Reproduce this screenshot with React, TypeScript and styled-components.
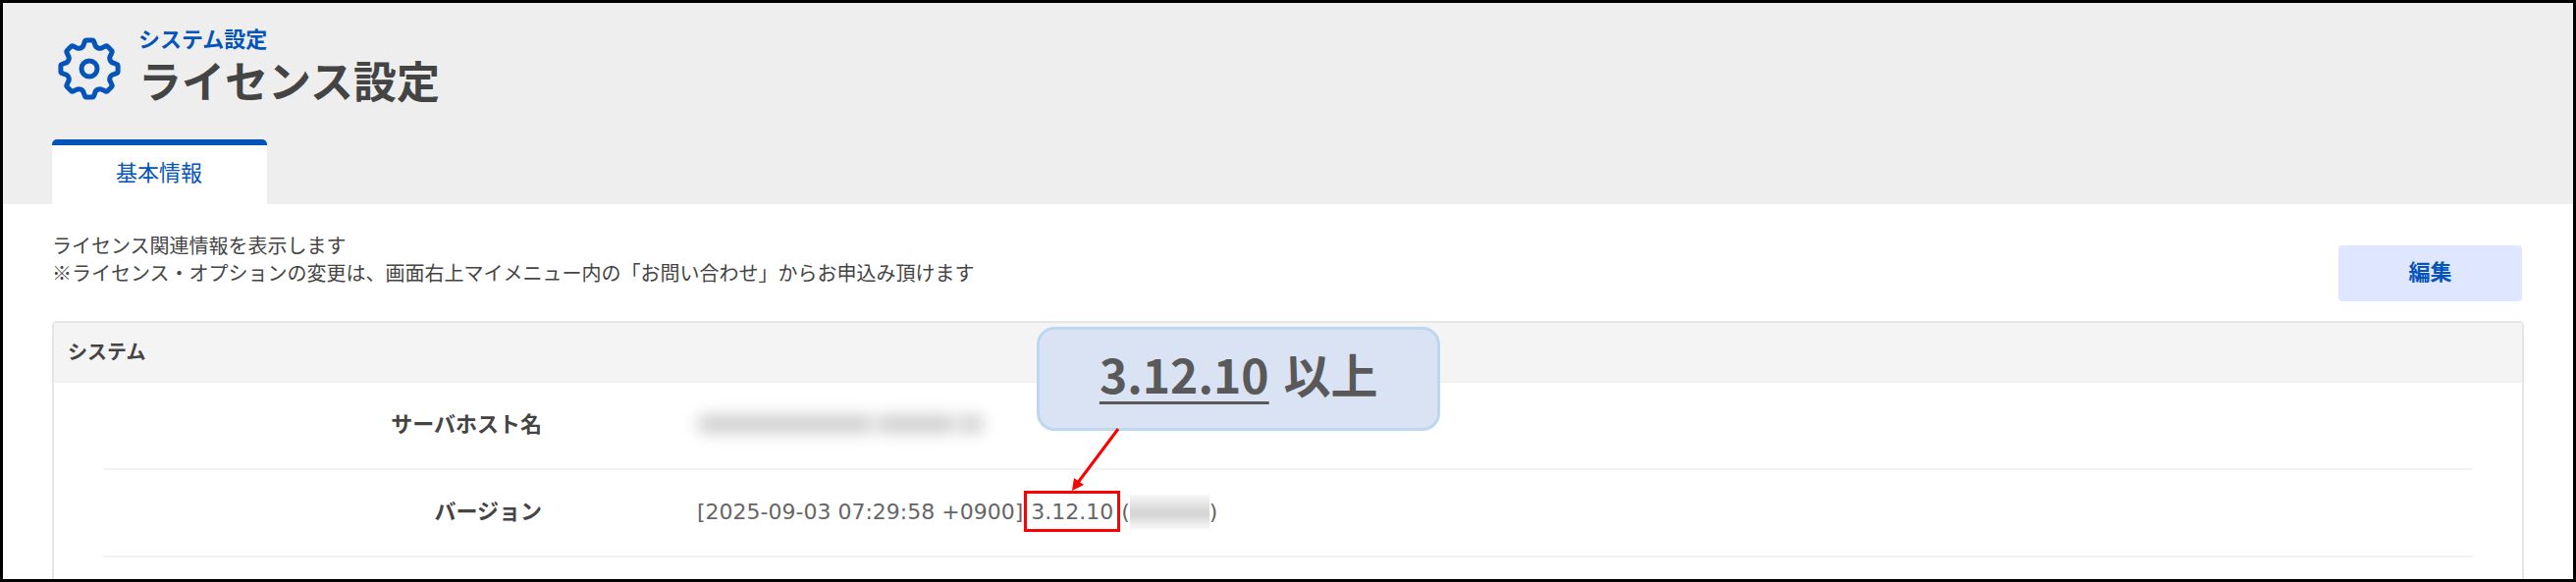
import React from "react";
import styled, { createGlobalStyle } from "styled-components";

const BLUE = "#0454ba";

const GlobalStyle = createGlobalStyle`
  *, *::before, *::after { box-sizing: border-box; }
  body {
    margin: 0;
    font-family: "Noto Sans CJK JP", "Noto Sans", sans-serif;
    color: #444;
    background: #fff;
  }
`;

const Frame = styled.div`
  display: flex;
  flex-direction: column;
  height: 100vh;
  border: 3px solid #000;
  overflow: hidden;
`;

const Header = styled.header`
  padding: 20px 50px 0;
  background: #eee;
`;

const TitleRow = styled.div`
  display: flex;
  align-items: center;
  gap: 18px;
  padding-left: 6px;
`;

const GearSvg = styled.svg`
  flex: none;
  width: 64px;
  height: 64px;
  fill: none;
  stroke: ${BLUE};
  stroke-width: 5;
  stroke-linejoin: round;
`;

const Titles = styled.div`
  padding-bottom: 8px;
`;

const Category = styled.p`
  margin: 0;
  font-size: 22px;
  font-weight: 700;
  line-height: 30px;
  color: ${BLUE};
`;

const Title = styled.h1`
  margin: 0;
  font-size: 44px;
  font-weight: 700;
  line-height: 56px;
`;

const Tabs = styled.nav`
  display: flex;
  margin-top: 25px;
`;

const Tab = styled.a`
  padding: 10px 66px 18px 65px;
  border-top: 6px solid ${BLUE};
  border-radius: 5px 5px 0 0;
  background: #fff;
  color: ${BLUE};
  font-size: 22px;
  line-height: 32px;
  text-decoration: none;
`;

const Main = styled.main`
  flex: 1;
  display: flex;
  flex-direction: column;
  padding: 28px 50px 0;
`;

const Toolbar = styled.div`
  display: flex;
  justify-content: space-between;
  align-items: flex-start;
  padding-right: 2px;
  margin-bottom: 20px;
`;

const Description = styled.p`
  margin: 0;
  font-size: 20px;
  line-height: 28px;
`;

const EditButton = styled.button`
  width: 187px;
  height: 57px;
  margin-top: 14px;
  padding: 0 0 8px;
  border: 0;
  border-radius: 4px;
  background: #dfe6ff;
  color: ${BLUE};
  font: 700 22px "Noto Sans CJK JP", sans-serif;
`;

const Panel = styled.section`
  flex: 1;
  border: 2px solid #e6e6e6;
  border-bottom: 0;
  border-radius: 5px 5px 0 0;
`;

const PanelTitle = styled.h2`
  margin: 0;
  padding: 14px 14px 16px;
  border-bottom: 1px solid #eee;
  background: #f4f4f4;
  font-size: 20px;
  font-weight: 700;
  line-height: 30px;
`;

const Rows = styled.dl`
  margin: 0 50px;
`;

const Row = styled.div`
  display: flex;
  align-items: center;
  gap: 158px;
  height: 89px;
  padding-bottom: 3px;
  border-bottom: 2px solid #f2f2f2;
`;

const Label = styled.dt`
  width: 447px;
  padding-bottom: 4px;
  font-size: 22px;
  font-weight: 700;
  text-align: right;
`;

const Value = styled.dd`
  display: flex;
  align-items: center;
  margin: 0;
  font-family: "DejaVu Sans", sans-serif;
  font-size: 22px;
  color: #666;
`;

const Highlight = styled.span`
  position: relative;
  display: inline-flex;
  align-items: center;
  height: 42px;
  margin: 0 1px;
  padding: 0 4px;
  border: 3px solid #f00;
`;

const Callout = styled.div`
  position: absolute;
  left: 10px;
  bottom: 100px;
  display: flex;
  align-items: center;
  justify-content: center;
  gap: 4px;
  width: 411px;
  height: 106px;
  padding-bottom: 12px;
  border: 3px solid #bcd7ef;
  border-radius: 18px;
  background: #dae3f3;
  color: #595959;
  font: 700 48px/64px "Noto Sans CJK JP", sans-serif;
  white-space: pre;
`;

const Underlined = styled.span`
  text-decoration: underline;
  text-decoration-thickness: 3px;
  text-decoration-skip-ink: none;
  text-underline-offset: 8px;
`;

const Arrow = styled.svg`
  position: absolute;
  left: 43px;
  bottom: 38px;
  width: 56px;
  height: 66px;
`;

const Redacted = styled.span`
  display: flex;
  gap: 6px;
  padding-left: 2px;
  filter: blur(8px);
`;

const RedactedWord = styled.span<{ $width: number }>`
  width: ${(p) => p.$width}px;
  height: 18px;
  background: #cdcdcd;
`;

const RedactedBuild = styled.span`
  width: 81px;
  height: 35px;
  background: linear-gradient(#f8f8f8, #d8d8d8 45%, #d6d6d6 60%, #f8f8f8);
`;

// Outline of an eight-toothed gear centred on the origin.
function gearPath(): string {
  const tooth = [
    [-5.6, -25.2], [-4.9, -27], [-4.4, -29.1], [-3, -29.1],
    [3, -29.1], [4.4, -29.1], [4.9, -27], [5.6, -25.2],
  ];
  let d = "";
  for (let i = 0; i < 8; i++) {
    const a = (i * Math.PI) / 4;
    const p = tooth.map(
      ([x, y]) =>
        `${(x * Math.cos(a) - y * Math.sin(a)).toFixed(2)} ${(x * Math.sin(a) + y * Math.cos(a)).toFixed(2)}`
    );
    d += i === 0 ? `M${p[0]}` : `A5.2 5.2 0 0 0 ${p[0]}`;
    d += `L${p[1]}Q${p[2]} ${p[3]}L${p[4]}Q${p[5]} ${p[6]}L${p[7]}`;
    if (i === 7) d += "A5.2 5.2 0 0 0 -5.6 -25.2Z";
  }
  return d;
}

const GearIcon = () => (
  <GearSvg viewBox="-32 -32 64 64" aria-hidden="true">
    <path d={gearPath()} />
    <circle r="8" />
  </GearSvg>
);

export default function App() {
  return (
    <>
      <GlobalStyle />
      <Frame>
        <Header>
          <TitleRow>
            <GearIcon />
            <Titles>
              <Category>システム設定</Category>
              <Title>ライセンス設定</Title>
            </Titles>
          </TitleRow>
          <Tabs>
            <Tab href="#basic" aria-current="page">基本情報</Tab>
          </Tabs>
        </Header>
        <Main>
          <Toolbar>
            <Description>
              ライセンス関連情報を表示します
              <br />
              ※ライセンス・オプションの変更は、画面右上マイメニュー内の「お問い合わせ」からお申込み頂けます
            </Description>
            <EditButton type="button">編集</EditButton>
          </Toolbar>
          <Panel>
            <PanelTitle>システム</PanelTitle>
            <Rows>
              <Row>
                <Label>サーバホスト名</Label>
                <Value>
                  <Redacted>
                    <RedactedWord $width={176} />
                    <RedactedWord $width={78} />
                    <RedactedWord $width={22} />
                  </Redacted>
                </Value>
              </Row>
              <Row>
                <Label>バージョン</Label>
                <Value>
                  [2025-09-03 07:29:58 +0900]
                  <Highlight>
                    3.12.10
                    <Callout>
                      <Underlined>3.12.10</Underlined>
                      <span> 以上</span>
                    </Callout>
                    <Arrow viewBox="0 0 56 66" aria-hidden="true">
                      <path d="M50 2 8 58" fill="none" stroke="#f00" strokeWidth="3" />
                      <path d="M3 65 5 52 15 59Z" fill="#f00" />
                    </Arrow>
                  </Highlight>
                  <span>(</span>
                  <RedactedBuild />
                  <span>)</span>
                </Value>
              </Row>
            </Rows>
          </Panel>
        </Main>
      </Frame>
    </>
  );
}
